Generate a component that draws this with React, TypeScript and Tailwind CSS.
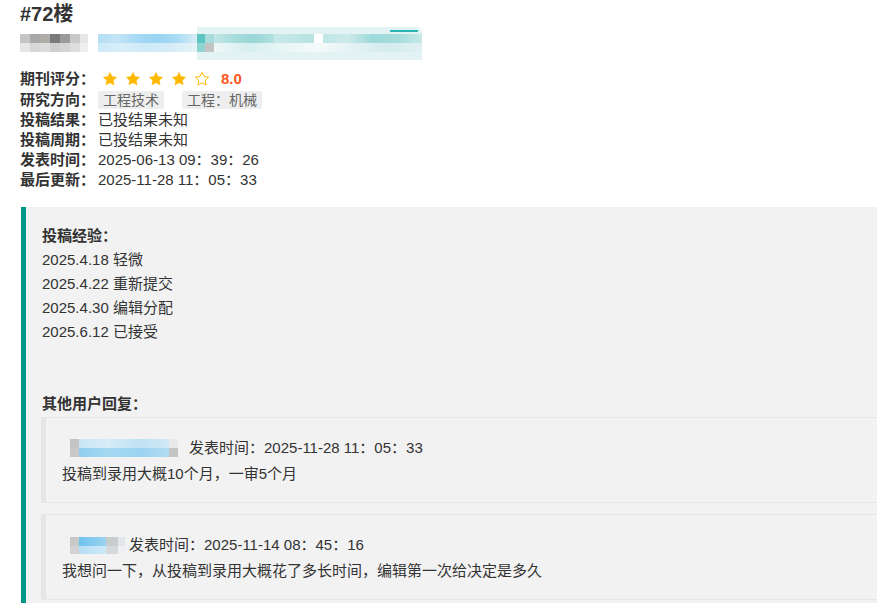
import React from "react";

const font = { fontFamily: '"Liberation Sans", "Noto Sans CJK SC", sans-serif' };

const Star = ({ filled }: { filled: boolean }) => (
  <svg viewBox="0 0 24 24" className="mr-[7px] h-[16px] w-[16px]">
    <path
      d="M12 2l3.09 6.26L22 9.27l-5 4.87 1.18 6.88L12 17.77l-6.18 3.25L7 14.14 2 9.27l6.91-1.01L12 2z"
      fill={filled ? "#FFB800" : "none"}
      stroke="#FFB800"
      strokeWidth={filled ? 0.6 : 1.5}
      strokeLinejoin="round"
    />
  </svg>
);

const Tag = ({ children }: { children: React.ReactNode }) => (
  <span className="inline-flex h-[18px] items-center rounded-[2px] bg-[#eeeeee] px-[5px] text-[14px] leading-[18px] text-[#666]">
    {children}
  </span>
);

const InfoRow = (props: { label: string; children: React.ReactNode; h?: string }) => (
  <div className={`flex items-center ${props.h ?? "h-[20px]"}`}>
    <span className="w-[78px] font-bold text-[#333]">{props.label}</span>
    <div className="flex items-center text-[#333]">{props.children}</div>
  </div>
);

// pixelated (masked) user name
const NameBlur = (props: { wide?: boolean }) =>
  props.wide ? (
    <span className="ml-[9px] mr-[11px] inline-flex h-[18px] w-[108px] flex-col overflow-hidden align-middle">
      <span className="flex h-[9px]">
        <span className="w-[9px] bg-[#c4c4c4]" />
        <span className="flex-1 bg-[linear-gradient(90deg,#c9e6f6,#d6ecf7,#bfe2f4,#cfe8f6)]" />
        <span className="w-[9px] bg-[#e8e8e8]" />
      </span>
      <span className="flex h-[9px]">
        <span className="w-[9px] bg-[#c8c8c8]" />
        <span className="flex-1 bg-[linear-gradient(90deg,#8fcdef,#a6d8f2,#9ad3f0,#b0dcf3)]" />
        <span className="w-[9px] bg-[#c4c4c4]" />
      </span>
    </span>
  ) : (
    <span className="ml-[9px] mr-[4px] inline-flex h-[17px] w-[55px] flex-col overflow-hidden align-middle">
      <span className="flex h-[9px]">
        <span className="w-[9px] bg-[#c8c8c8]" />
        <span className="w-[27px] bg-[linear-gradient(90deg,#6fc3ee,#9ad3f0)]" />
        <span className="w-[12px] bg-[#c9cccc]" />
        <span className="w-[7px] bg-[#e3e6ea]" />
      </span>
      <span className="flex h-[8px]">
        <span className="w-[9px] bg-[#d2d2d2]" />
        <span className="w-[27px] bg-[linear-gradient(90deg,#b7def3,#cde9f8)]" />
        <span className="w-[12px] bg-[#d6d9d9]" />
        <span className="w-[7px] bg-[#eef0f2]" />
      </span>
    </span>
  );

const Reply = (props: { wide?: boolean; time: string; text: string; className?: string }) => (
  <div
    className={`border border-l-[5px] border-[#e6e6e6] px-[15px] pb-[15px] pt-[17px] text-[#333] ${props.className ?? ""}`}
  >
    <div className="flex h-[26px] items-center leading-[26px]">
      <NameBlur wide={props.wide} />
      <span>发表时间：{props.time}</span>
    </div>
    <div className="pl-px leading-[26px]">{props.text}</div>
  </div>
);

export default function App() {
  return (
    <div className="h-[603px] w-[877px] overflow-hidden bg-white pl-[20px] text-[15px]" style={font}>
      <div className="w-[940px]">
        <h2 className="h-[28px] text-[20px] font-bold leading-[28px] text-[#333]">#72楼</h2>

        {/* blurred author line */}
        <div className="flex h-[30px] items-center">
          <div className="flex h-[18px] w-[68px] flex-col">
            <div className="flex h-[9px]">
              <span className="w-[10px] bg-[#c4c4c4]" />
              <span className="w-[10px] bg-[#a8a8a8]" />
              <span className="w-[10px] bg-[#b0aca8]" />
              <span className="w-[10px] bg-[#7a7a7a]" />
              <span className="w-[10px] bg-[#9b9b9b]" />
              <span className="w-[10px] bg-[#c9c9c9]" />
              <span className="w-[8px] bg-[#e6e6e6]" />
            </div>
            <div className="flex h-[9px]">
              <span className="w-[10px] bg-[#e6e6e6]" />
              <span className="w-[10px] bg-[#d7d7d7]" />
              <span className="w-[10px] bg-[#dcdcdc]" />
              <span className="w-[10px] bg-[#cfcfcf]" />
              <span className="w-[10px] bg-[#d4d4d4]" />
              <span className="w-[10px] bg-[#dedede]" />
              <span className="w-[8px] bg-[#eeeeee]" />
            </div>
          </div>
          <div className="ml-[10px] flex h-[18px] w-[99px] flex-col">
            <div className="h-[9px] bg-[linear-gradient(90deg,#b4def5,#c3e4f6,#a6d9f4,#99d5f3,#a9dbf4,#d8eef5)]" />
            <div className="h-[9px] bg-[linear-gradient(90deg,#cde9f8,#d8eef9,#cfeaf8,#d6edf8,#e6f4f7)]" />
          </div>
          <div className="relative -my-[2px] flex h-[33px] w-[225px] flex-col justify-center rounded-tr-[6px] bg-[#e3f3f3]">
            <div className="absolute right-[4px] top-[3px] h-[2px] w-[28px] bg-[#2ab5b5]" />
            <div className="flex h-[9px]">
              <span className="w-[8px] bg-[#5fc4c4]" />
              <span className="w-[9px] bg-[#a8dcdc]" />
              <span className="w-[60px] bg-[linear-gradient(90deg,#c4e6e6,#a8dcdc,#98d6d6,#b4e0e0)]" />
              <span className="w-[40px] bg-[linear-gradient(90deg,#c8e8e8,#b8e2e2)]" />
              <span className="w-[9px] bg-[#ffffff]" />
              <span className="w-[99px] bg-[linear-gradient(90deg,#c0e6e6,#cde9e9,#9ed9d9,#a6dcdc,#c8e8e8)]" />
            </div>
            <div className="flex h-[9px]">
              <span className="w-[8px] bg-[#8fd3d3]" />
              <span className="w-[9px] bg-[#c4c4c4]" />
              <span className="w-[208px] bg-[linear-gradient(90deg,#f0f8f8,#d8efef,#e8f5f5,#f4fafa,#e4f2f4,#d4ecee,#e0f0f2)]" />
            </div>
          </div>
        </div>

        {/* journal info */}
        <div className="mt-[10px]">
          <InfoRow label="期刊评分：" h="h-[22px]">
            <div className="flex items-center pl-[4px]">
              <Star filled />
              <Star filled />
              <Star filled />
              <Star filled />
              <Star filled={false} />
            </div>
            <span className="ml-[4px] font-bold text-[#FF5722]">8.0</span>
          </InfoRow>
          <InfoRow label="研究方向：">
            <Tag>工程技术</Tag>
            <span className="ml-[18px]">
              <Tag>工程：机械</Tag>
            </span>
          </InfoRow>
          <InfoRow label="投稿结果：">已投结果未知</InfoRow>
          <InfoRow label="投稿周期：">已投结果未知</InfoRow>
          <InfoRow label="发表时间：">2025-06-13 09：39：26</InfoRow>
          <InfoRow label="最后更新：">2025-11-28 11：05：33</InfoRow>
        </div>

        {/* experience quote */}
        <div className="ml-px mt-[17px] rounded-r-[2px] border-l-[5px] border-[#009688] bg-[#f2f2f2] pb-[15px] pl-[16px] pr-[15px] pt-[17px] leading-[24px] text-[#333]">
          <div className="font-bold">投稿经验：</div>
          <div>2025.4.18 轻微</div>
          <div>2025.4.22 重新提交</div>
          <div>2025.4.30 编辑分配</div>
          <div>2025.6.12 已接受</div>
          <div className="h-[48px]" />
          <div className="font-bold">其他用户回复：</div>
          <Reply
            wide
            className="-ml-px mt-px"
            time="2025-11-28 11：05：33"
            text="投稿到录用大概10个月，一审5个月"
          />
          <Reply
            className="-ml-px mt-[11px]"
            time="2025-11-14 08：45：16"
            text="我想问一下，从投稿到录用大概花了多长时间，编辑第一次给决定是多久"
          />
        </div>
      </div>
    </div>
  );
}
